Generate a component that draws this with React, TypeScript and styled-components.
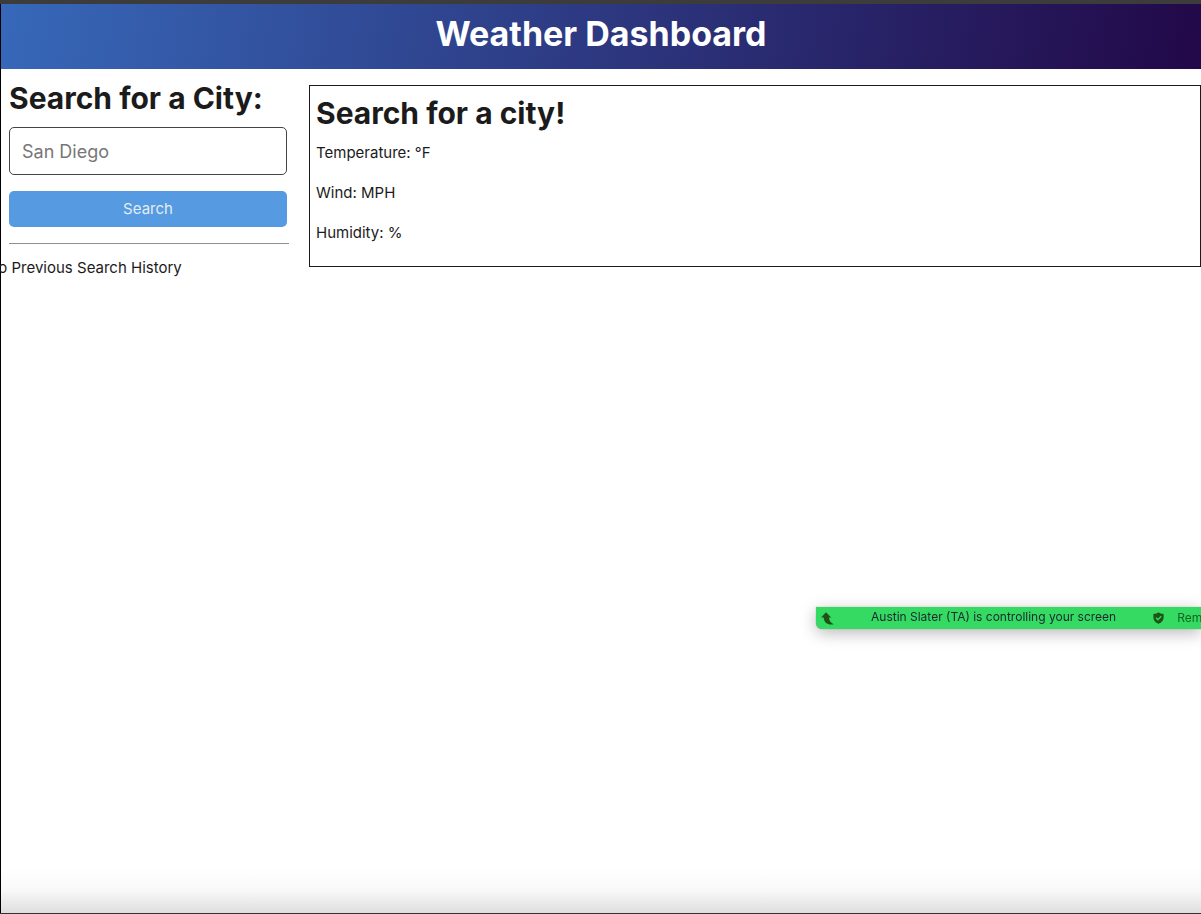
import React from "react";
import styled, { createGlobalStyle } from "styled-components";

const GlobalStyle = createGlobalStyle`
  *, *::before, *::after { box-sizing: border-box; }
  body {
    margin: 0;
    background: #fff;
    color: #1b1b1c;
    font-family: Inter, "Liberation Sans", sans-serif;
    font-size: 15px;
    line-height: 24px;
    overflow-x: hidden;
  }
  h1, h2, p { margin: 0; }
`;

const Page = styled.div`
  display: flex;
  flex-direction: column;
  min-height: 100vh;
  overflow: hidden;
  border-top: 4px solid #3c3c3c;
  border-bottom: 1px solid #343434;
  box-shadow: inset 1px 0 #000;
`;

const Header = styled.header`
  height: 65px;
  margin-left: 1px;
  padding-top: 8px;
  text-align: center;
  color: #fff;
  background: linear-gradient(100deg, #3768b9, #220848);
`;

const Title = styled.h1`
  font-size: 34px;
  line-height: 44px;
  font-weight: 700;
`;

const Main = styled.main`
  display: grid;
  grid-template-columns: 280px minmax(0, 1fr);
  column-gap: 20px;
  align-items: start;
  flex: 1;
  padding-left: 9px;
`;

const Sidebar = styled.aside`
  padding-top: 10px;
`;

const Heading = styled.h2`
  font-size: 30px;
  line-height: 38px;
  font-weight: 700;
  white-space: nowrap;
`;

const SearchForm = styled.form`
  display: grid;
  row-gap: 16px;
  margin: 10px 2px 16px 0;
`;

const CityInput = styled.input`
  width: 100%;
  height: 48px;
  padding: 0 12px;
  border: 1px solid #444;
  border-radius: 5px;
  background: #fff;
  font: inherit;
  font-size: 18px;
  &::placeholder { color: #777; opacity: 1; }
`;

const SearchButton = styled.button`
  height: 36px;
  padding: 0;
  border: 0;
  border-radius: 5px;
  background: #569ae1;
  color: #e1edf2;
  font: inherit;
`;

const Divider = styled.hr`
  margin: 0 0 12px;
  border: 0;
  border-top: 1px solid #8d8f90;
`;

const History = styled.p`
  margin-left: -22px;
  white-space: nowrap;
`;

const Results = styled.section`
  margin-top: 16px;
  padding: 8px 6px 21px;
  border: 1px solid #1b1b1c;
`;

const Readings = styled.div`
  display: grid;
  row-gap: 16px;
  margin-top: 9px;
`;

const Fade = styled.div`
  height: 44px;
  margin-left: 1px;
  background: linear-gradient(#fff, #f8f8f8 50%, #dedede);
`;

const ShareBar = styled.div`
  position: fixed;
  top: 607px;
  right: 0;
  width: 385px;
  height: 22px;
  display: flex;
  align-items: center;
  padding-left: 5px;
  border-radius: 0 0 0 6px;
  background: #34da62;
  box-shadow: 0 4px 16px rgba(0, 0, 0, 0.28), 0 0 1px rgba(0, 0, 0, 0.5);
  color: #14301f;
  font-size: 12px;
  line-height: 20px;
  white-space: nowrap;
  clip-path: inset(-40px 0 -40px -40px);
`;

const ShareText = styled.span`
  flex: 0 0 auto;
  margin: 0 37px;
  padding-bottom: 2px;
  color: #1c2733;
`;

const RemoteButton = styled.button`
  flex: 0 0 auto;
  margin-left: 13px;
  padding: 0;
  border: 0;
  background: none;
  color: #12661f;
  font: inherit;
`;

const Icon = styled.svg`
  flex: 0 0 auto;
  display: block;
`;

export default function App() {
  return (
    <>
      <GlobalStyle />
      <Page>
        <Header>
          <Title>Weather Dashboard</Title>
        </Header>
        <Main>
          <Sidebar>
            <Heading as="label" htmlFor="city">Search for a City:</Heading>
            <SearchForm onSubmit={(e: React.FormEvent) => e.preventDefault()}>
              <CityInput id="city" type="text" placeholder="San Diego" />
              <SearchButton type="submit">Search</SearchButton>
            </SearchForm>
            <Divider />
            <History>No Previous Search History</History>
          </Sidebar>
          <Results>
            <Heading>Search for a city!</Heading>
            <Readings>
              <p>Temperature: °F</p>
              <p>Wind: MPH</p>
              <p>Humidity: %</p>
            </Readings>
          </Results>
        </Main>
        <Fade />
      </Page>
      <ShareBar role="status">
        <Icon width="13" height="13" viewBox="0 0 13 13" aria-hidden="true">
          <path d="M5 0.2 10.2 5.4H8C8.2 8.6 9.6 10.8 12.8 12.2 7 13.4 3 10.8 2.7 5.4H0.1Z" fill="#1f5215" />
        </Icon>
        <ShareText>Austin Slater (TA) is controlling your screen</ShareText>
        <Icon width="11" height="12" viewBox="0 0 11 12" aria-hidden="true">
          <path d="M5.5 0.3C6.8 1.5 8.4 2 10.6 2V5.5C10.6 8.6 8.7 10.6 5.5 11.8 2.3 10.6 0.4 8.6 0.4 5.5V2C2.6 2 4.2 1.5 5.5 0.3Z" fill="#1f5215" />
          <path d="M3 5.8 4.9 7.7 8.2 4.3" fill="none" stroke="#34da62" strokeWidth="1.3" />
        </Icon>
        <RemoteButton type="button">Remote Control</RemoteButton>
      </ShareBar>
    </>
  );
}
